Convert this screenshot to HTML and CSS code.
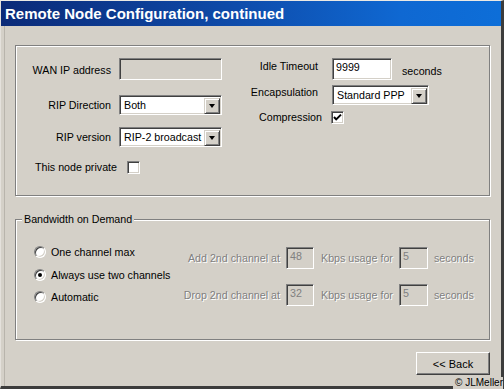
FILE: index.html
```html
<!DOCTYPE html>
<html>
<head>
<meta charset="utf-8">
<link rel="stylesheet" href="styles.css">
</head>
<body>
<div class="window">
  <div class="titlebar"><span class="title">Remote Node Configuration, continued</span></div>
  <div class="content">
    <div class="group group-main">
      <div class="col col-left">
        <div class="row row-wan">
          <span class="lbl lbl-left lbl-down">WAN IP address</span>
          <span class="field field-disabled field-wan"></span>
        </div>
        <div class="row row-dir">
          <span class="lbl lbl-left">RIP Direction</span>
          <span class="select select-left"><span class="select-text">Both</span><span class="drop"><span class="arrow"></span></span></span>
        </div>
        <div class="row row-ver">
          <span class="lbl lbl-left">RIP version</span>
          <span class="select select-left"><span class="select-text">RIP-2 broadcast</span><span class="drop"><span class="arrow"></span></span></span>
        </div>
        <div class="row row-private">
          <span class="lbl-plain">This node private</span>
          <span class="check"></span>
        </div>
      </div>
      <div class="col col-right">
        <div class="row row-idle">
          <span class="lbl lbl-right lbl-up">Idle Timeout</span>
          <span class="field field-idle"><span class="field-text">9999</span></span>
          <span class="unit unit-idle">seconds</span>
        </div>
        <div class="row row-encap">
          <span class="lbl lbl-right lbl-up">Encapsulation</span>
          <span class="select select-encap"><span class="select-text">Standard PPP</span><span class="drop"><span class="arrow"></span></span></span>
        </div>
        <div class="row row-comp">
          <span class="lbl lbl-right lbl-comp">Compression</span>
          <span class="check check-on"><svg width="9" height="9" viewBox="0 0 9 9"><polyline points="1,4 3.2,6.4 8,1.6" fill="none" stroke="#000" stroke-width="2"/></svg></span>
        </div>
      </div>
    </div>

    <div class="group group-bod">
      <span class="legend">Bandwidth on Demand</span>
      <div class="radios">
        <div class="radio-row"><span class="radio"></span><span class="radio-label">One channel max</span></div>
        <div class="radio-row radio-row-2"><span class="radio radio-on"><span class="dot"></span></span><span class="radio-label">Always use two channels</span></div>
        <div class="radio-row radio-row-3"><span class="radio"></span><span class="radio-label">Automatic</span></div>
      </div>
      <div class="channels">
        <div class="ch-row">
          <span class="ch-lbl dis">Add 2nd channel at</span>
          <span class="field field-disabled ch-a"><span class="field-text dis-val">48</span></span>
          <span class="ch-kbps dis">Kbps usage for</span>
          <span class="field field-disabled ch-b"><span class="field-text dis-val">5</span></span>
          <span class="dis">seconds</span>
        </div>
        <div class="ch-row ch-row-2">
          <span class="ch-lbl dis">Drop 2nd channel at</span>
          <span class="field field-disabled ch-a"><span class="field-text dis-val">32</span></span>
          <span class="ch-kbps dis">Kbps usage for</span>
          <span class="field field-disabled ch-b"><span class="field-text dis-val">5</span></span>
          <span class="dis">seconds</span>
        </div>
      </div>
    </div>

    <div class="actions">
      <button class="btn">&lt;&lt; Back</button>
    </div>
  </div>
  <span class="credit">© JLMeller</span>
</div>
</body>
</html>
```

FILE: styles.css
```css
html, body {
  margin: 0;
  padding: 0;
}

body {
  width: 504px;
  height: 389px;
  overflow: hidden;
  background: #d4d0c8;
  font-family: "Liberation Sans", Arial, sans-serif;
  font-size: 10.7px;
  color: #000;
}

.window {
  position: relative;
  width: 504px;
  height: 389px;
  box-sizing: border-box;
  background: #d4d0c8;
  border-top: 1px solid #ebe9e4;
  border-left: 1px solid #e4e1dc;
  border-right: 3px solid #3c3c3c;
  border-bottom: 3px solid #3c3c3c;
  box-shadow: inset 3px 0 0 #d4d0c8, inset 4px 0 0 #b8b4ac;
}

.titlebar {
  height: 25px;
  background: linear-gradient(to right, #0b2a78 0%, #0e4aa8 45%, #0f68d2 80%, #0d6ed8 100%);
  display: flex;
  align-items: center;
}

.title {
  padding-left: 4px;
  color: #fff;
  font-weight: bold;
  font-size: 15px;
  line-height: 25px;
}

.content {
  padding: 0 11px 0 14px;
}

.group {
  box-sizing: border-box;
  border: 1px solid #808080;
  box-shadow: inset 1px 1px 0 #fff, 1px 1px 0 #fff;
}

.group-main {
  margin-top: 19px;
  height: 151px;
  display: flex;
  padding-top: 12px;
}

.col-left {
  margin-left: 9px;
  display: flex;
  flex-direction: column;
}

.col-right {
  margin-left: 18px;
  display: flex;
  flex-direction: column;
}

.row {
  display: flex;
  align-items: center;
}

.lbl {
  line-height: 13px;
  white-space: nowrap;
}

.lbl-left {
  width: 86px;
  text-align: right;
  margin-right: 8px;
}

.lbl-right {
  width: 78px;
  text-align: right;
  margin-right: 14px;
}

.lbl-down {
  margin-top: 3px;
}

.lbl-up {
  margin-bottom: 5px;
}

.lbl-comp {
  width: 82px;
  margin-right: 9px;
}

.row-wan { height: 22px; }
.row-dir { height: 20px; margin-top: 15px; }
.row-ver { height: 20px; margin-top: 12px; }
.row-private { height: 13px; margin-top: 14px; padding-left: 10px; }

.row-idle { height: 22px; }
.row-encap { height: 20px; margin-top: 5px; }
.row-comp { height: 13px; margin-top: 6px; }

.lbl-plain {
  line-height: 13px;
  margin-right: 10px;
  white-space: nowrap;
}

/* sunken fields */
.field {
  box-sizing: border-box;
  display: flex;
  align-items: center;
  height: 22px;
  background: #fff;
  border: 1px solid;
  border-color: #808080 #fff #fff #808080;
  box-shadow: inset 1px 1px 0 #404040, inset -1px -1px 0 #d4d0c8;
}

.field-disabled {
  background: #d4d0c8;
}

.field-wan { width: 103px; }
.field-idle { width: 60px; }

.field-text {
  padding-left: 3px;
  line-height: 13px;
  margin-bottom: 4px;
}

.unit-idle {
  margin-left: 10px;
  margin-top: 4px;
}

/* select boxes */
.select {
  box-sizing: border-box;
  display: flex;
  align-items: center;
  height: 20px;
  background: #fff;
  border: 1px solid;
  border-color: #808080 #fff #fff #808080;
  box-shadow: inset 1px 1px 0 #404040, inset -1px -1px 0 #d4d0c8;
  padding: 2px 1px 1px 2px;
}

.select-left { width: 103px; }
.select-encap { width: 97px; height: 20px; }

.select-text {
  flex: 1;
  padding-left: 2px;
  white-space: nowrap;
  overflow: hidden;
  line-height: 13px;
}

.drop {
  box-sizing: border-box;
  width: 16px;
  height: 16px;
  background: #d4d0c8;
  border: 1px solid;
  border-color: #d4d0c8 #404040 #404040 #d4d0c8;
  box-shadow: inset 1px 1px 0 #fff, inset -1px -1px 0 #808080;
  display: flex;
  align-items: center;
  justify-content: center;
}

.arrow {
  width: 0;
  height: 0;
  border-left: 3.5px solid transparent;
  border-right: 3.5px solid transparent;
  border-top: 4px solid #000;
  margin-top: 1px;
}

/* checkbox */
.check {
  box-sizing: border-box;
  width: 13px;
  height: 13px;
  background: #fff;
  border: 1px solid;
  border-color: #808080 #fff #fff #808080;
  box-shadow: inset 1px 1px 0 #404040, inset -1px -1px 0 #d4d0c8;
  display: flex;
  align-items: center;
  justify-content: center;
}

.check svg {
  display: block;
}

/* bandwidth group */
.group-bod {
  position: relative;
  margin-top: 23px;
  height: 121px;
  display: flex;
  padding-left: 18px;
}

.legend {
  position: absolute;
  left: 6px;
  top: -8px;
  padding: 0 2px;
  background: #d4d0c8;
  line-height: 14px;
  white-space: nowrap;
}

.radios {
  width: 144px;
  padding-top: 26px;
  display: flex;
  flex-direction: column;
}

.radio-row {
  display: flex;
  align-items: center;
  height: 12px;
}

.radio-row-2 { margin-top: 11px; }
.radio-row-3 { margin-top: 10px; }

.radio {
  box-sizing: border-box;
  width: 12px;
  height: 12px;
  border-radius: 50%;
  background: #fff;
  border: 1px solid;
  border-color: #808080 #fff #fff #808080;
  box-shadow: inset 1px 1px 0 #404040, inset -1px -1px 0 #d4d0c8;
  display: flex;
  align-items: center;
  justify-content: center;
  flex: none;
}

.dot {
  width: 4px;
  height: 4px;
  border-radius: 50%;
  background: #000;
}

.radio-label {
  margin-left: 5px;
  line-height: 13px;
  white-space: nowrap;
}

.channels {
  padding-top: 27px;
  display: flex;
  flex-direction: column;
}

.ch-row {
  display: flex;
  align-items: center;
  height: 22px;
}

.ch-row-2 {
  margin-top: 15px;
}

.dis {
  color: #808080;
  text-shadow: 1px 1px 0 #fff;
  white-space: nowrap;
  line-height: 13px;
}

.dis-val {
  color: #808080;
}

.ch-lbl {
  width: 102px;
  text-align: right;
  margin-right: 6px;
}

.ch-a { width: 28px; margin-right: 7px; }
.ch-b { width: 29px; margin-right: 6px; }

.ch-kbps {
  width: 71px;
  margin-right: 7px;
}

/* footer */
.actions {
  display: flex;
  justify-content: flex-end;
  margin-top: 12px;
}

.btn {
  box-sizing: border-box;
  width: 74px;
  height: 23px;
  padding: 0;
  margin: 0;
  background: #d4d0c8;
  font-family: "Liberation Sans", Arial, sans-serif;
  font-size: 11px;
  color: #000;
  border: 1px solid;
  border-color: #fff #404040 #404040 #fff;
  box-shadow: inset -1px -1px 0 #808080, inset 1px 1px 0 #d4d0c8;
}

.credit {
  position: absolute;
  right: -2px;
  bottom: -3px;
  padding-left: 2px;
  background: #d4d0c8;
  font-size: 10px;
  line-height: 12px;
  white-space: nowrap;
}
```
